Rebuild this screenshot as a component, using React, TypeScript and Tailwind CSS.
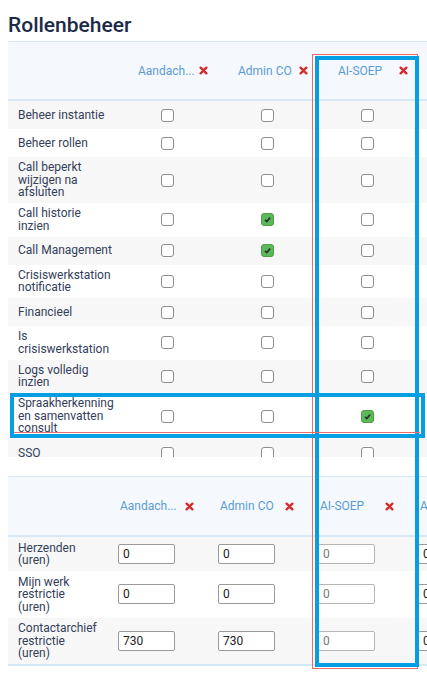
import React from 'react';

const roles = ['Aandach...', 'Admin CO', 'AI-SOEP', 'Aanvrager'];

const permissions: { label: string; checked: boolean[] }[] = [
  { label: 'Beheer instantie', checked: [false, false, false, false] },
  { label: 'Beheer rollen', checked: [false, false, false, false] },
  { label: 'Call beperkt wijzigen na afsluiten', checked: [false, false, false, false] },
  { label: 'Call historie inzien', checked: [false, true, false, false] },
  { label: 'Call Management', checked: [false, true, false, false] },
  { label: 'Crisiswerkstation notificatie', checked: [false, false, false, false] },
  { label: 'Financieel', checked: [false, false, false, false] },
  { label: 'Is crisiswerkstation', checked: [false, false, false, false] },
  { label: 'Logs volledig inzien', checked: [false, false, false, false] },
  { label: 'Spraakherkenning en samenvatten consult', checked: [false, false, true, false] },
  { label: 'SSO', checked: [false, false, false, false] },
];

const limits: { label: string; values: string[] }[] = [
  { label: 'Herzenden (uren)', values: ['0', '0', '0', '0'] },
  { label: 'Mijn werk restrictie (uren)', values: ['0', '0', '0', '0'] },
  { label: 'Contactarchief restrictie (uren)', values: ['730', '730', '0', '0'] },
];

function RemoveIcon() {
  return (
    <svg viewBox="0 0 10 10" className="h-[9px] w-[9px] shrink-0">
      <path d="M1.8 1.8 L8.2 8.2 M8.2 1.8 L1.8 8.2" stroke="#d42b2b" strokeWidth="2.6" strokeLinecap="round" />
    </svg>
  );
}

function Checkbox({ checked }: { checked: boolean }) {
  if (checked) {
    return (
      <span className="flex h-[13px] w-[13px] items-center justify-center rounded-[3px] border border-[#4e9f3d] bg-[#5cb85c]">
        <svg viewBox="0 0 10 10" className="h-[9px] w-[9px]">
          <path d="M2.2 5.4 L4.2 7.3 L7.9 2.9" fill="none" stroke="#2a2f2a" strokeWidth="1.8" />
        </svg>
      </span>
    );
  }
  return <span className="block h-[13px] w-[13px] rounded-[3px] border-[1.5px] border-[#8e8e8e] bg-white" />;
}

function HeaderCell({ name, pad, textW }: { name: string; pad: string; textW: string }) {
  return (
    <div className={`flex w-[100px] shrink-0 items-center ${pad}`}>
      <span className={`${textW} overflow-hidden whitespace-nowrap text-[12px] text-[#5b9bd5]`}>{name}</span>
      <RemoveIcon />
    </div>
  );
}

export default function App() {
  return (
    <div className="relative h-[674px] w-[427px] overflow-hidden bg-white font-['Roboto','Noto_Sans',sans-serif]">
      <h1 className="mb-[4px] ml-2 pt-[13px] text-[21px] font-medium leading-[24px] text-[#1c2a48]">Rollenbeheer</h1>

      {/* permissions table, clipped like a scroll area */}
      <div className="ml-2 h-[416px] w-[640px] overflow-hidden">
        <div className="flex h-[60px] items-center border-t border-b-2 border-[#d6e8f6] bg-[#f5f9fd]">
          <div className="w-[109px] shrink-0" />
          {roles.map((r) => (
            <HeaderCell key={r} name={r} pad="pl-[21px]" textW="w-[61px]" />
          ))}
        </div>
        {permissions.map((p, i) => (
          <div key={p.label} className={`flex min-h-[28px] items-center ${i % 2 === 0 ? 'bg-[#f7f7f7]' : 'bg-white'}`}>
            <div className="w-[109px] shrink-0 py-[4.25px] pl-[10px] pr-[3.5px] text-[12px] leading-[12.5px] text-[#34405a]">
              {p.label}
            </div>
            {p.checked.map((c, j) => (
              <div key={j} className="flex w-[100px] shrink-0 justify-center">
                <Checkbox checked={c} />
              </div>
            ))}
          </div>
        ))}
      </div>

      {/* limits table */}
      <div className="ml-2 mt-[19px] w-[640px]">
        <div className="flex h-[61px] items-center border-t border-b-2 border-[#d6e8f6] bg-[#f5f9fd]">
          <div className="w-[92px] shrink-0" />
          {roles.map((r) => (
            <HeaderCell key={r} name={r} pad="pl-[20px]" textW="w-[65px]" />
          ))}
        </div>
        {limits.map((l, i) => (
          <div key={l.label} className={`flex items-center ${i % 2 === 0 ? 'bg-[#f7f7f7]' : 'bg-white'}`}>
            <div className="w-[92px] shrink-0 py-[4.5px] pl-[10px] pr-[11px] text-[12px] leading-[12.5px] text-[#34405a]">
              {l.label}
            </div>
            {l.values.map((v, j) => (
              <div key={j} className="flex w-[100px] shrink-0 pl-[18px]">
                <input
                  readOnly
                  value={v}
                  className={`h-[20px] w-[57px] rounded-[2px] border bg-white pl-[4px] text-[12px] outline-none ${
                    j === 2 ? 'border-[#b5b5b5] text-[#777]' : 'border-[#9a9a9a] text-[#222]'
                  }`}
                />
              </div>
            ))}
          </div>
        ))}
        <div className="h-[2px] bg-[#d6e8f6]" />
      </div>

      {/* annotation overlays */}
      <div className="pointer-events-none absolute left-[312px] top-[54px] h-[615px] w-[106px] border border-[#f06a6a]" />
      <div className="pointer-events-none absolute left-[315px] top-[56px] h-[611px] w-[104px] border-4 border-[#049fe3]" />
      <div className="pointer-events-none absolute left-[14px] top-[432px] h-px w-[406px] bg-[#f06a6a]" />
      <div className="pointer-events-none absolute left-[10px] top-[393px] h-[45px] w-[415px] border-4 border-[#049fe3]" />
    </div>
  );
}
